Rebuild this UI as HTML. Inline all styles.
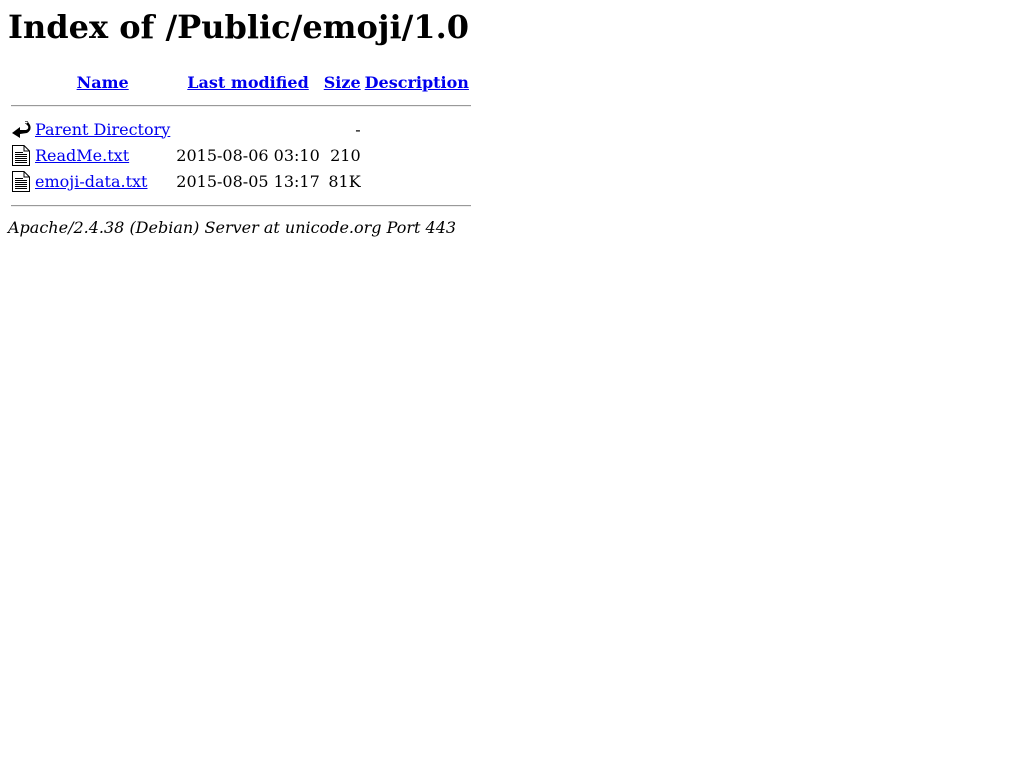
<!DOCTYPE html>
<html><head><style>
body{margin:8px;font-family:"DejaVu Serif",serif;font-size:16px;color:#000;background:#fff}
h1{font-size:32px;margin:0 0 24px 0;line-height:38px;margin-top:8px}
a{color:#0000ee}
table{border-spacing:2px 2px}
th{font-weight:bold;padding:1px}
td{padding:1px}
.n{padding-right:3px}
.d{padding-right:3px}
hr{border:none;border-top:1px solid #999;border-bottom:1px solid #eee;margin:9px 0 7px 0;height:0}
address{font-style:italic;margin-top:1px}
.ic{display:block;width:20px;height:22px}
</style></head><body>
<h1>Index of /Public/emoji/1.0</h1>
<table>
<tr><th valign="top"><span style="display:inline-block;width:20px"></span></th><th class="n"><a href="#">Name</a></th><th><a href="#">Last modified</a></th><th><a href="#">Size</a></th><th class="d"><a href="#">Description</a></th></tr>
<tr><th colspan="5"><hr></th></tr>
<tr><td valign="top"><svg class="ic" viewBox="0 0 20 22"><path d="M1 15 L9 9 L9 12 L15 12 Q18 11 17 8 L15 6 L17 4 L19 7 Q21 12 16 15 L9 16 L9 20 Z" fill="#000"/><path d="M14 3.5 L17 3.5 M14 5.5 L16 5.5" stroke="#666"/></svg></td><td class="n"><a href="#">Parent Directory</a></td><td>&nbsp;</td><td align="right">  - </td><td>&nbsp;</td></tr>
<tr><td valign="top"><svg class="ic" viewBox="0 0 20 22"><path d="M1.5 1.5 H13 L18.5 7 V21.5 H1.5 Z" fill="#fff" stroke="#000"/><path d="M13 1.5 V7 H18.5" fill="none" stroke="#000"/><path d="M4 8.5h8M4 10.5h12M4 12.5h12M4 14.5h12M4 16.5h12M4 18.5h12" stroke="#000" stroke-width="1"/></svg></td><td class="n"><a href="#">ReadMe.txt</a></td><td align="right">2015-08-06 03:10  </td><td align="right">210 </td><td>&nbsp;</td></tr>
<tr><td valign="top"><svg class="ic" viewBox="0 0 20 22"><path d="M1.5 1.5 H13 L18.5 7 V21.5 H1.5 Z" fill="#fff" stroke="#000"/><path d="M13 1.5 V7 H18.5" fill="none" stroke="#000"/><path d="M4 8.5h8M4 10.5h12M4 12.5h12M4 14.5h12M4 16.5h12M4 18.5h12" stroke="#000" stroke-width="1"/></svg></td><td class="n"><a href="#">emoji-data.txt</a></td><td align="right">2015-08-05 13:17  </td><td align="right"> 81K</td><td>&nbsp;</td></tr>
<tr><th colspan="5"><hr></th></tr>
</table>
<address>Apache/2.4.38 (Debian) Server at unicode.org Port 443</address>
</body></html>
